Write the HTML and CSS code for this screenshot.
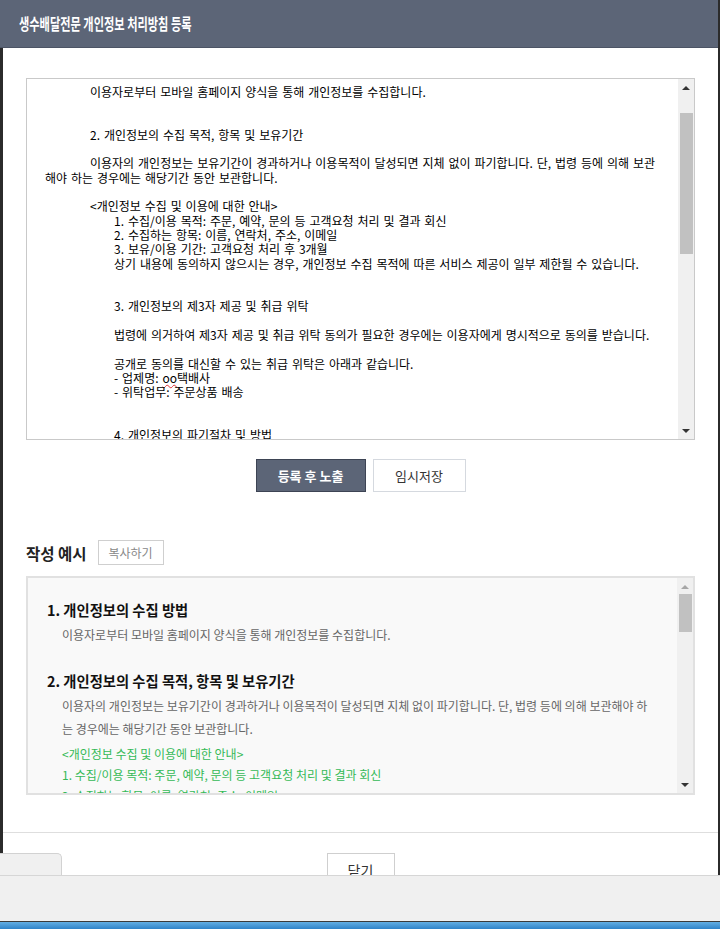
FILE: index.html
```html
<!DOCTYPE html>
<html>
  <head>
    <meta charset="utf-8"/>
    <meta name="viewport" content="width=device-width, initial-scale=1">
    <link rel="stylesheet" href="styles.css">
  </head>
<body>

<div class="win">
  <div class="head"><span class="title">생수배달전문 개인정보 처리방침 등록</span></div>

  <div class="sheet">
    <div class="ta">
      <div class="ta_text">
        <div class="i1">이용자로부터 모바일 홈페이지 양식을 통해 개인정보를 수집합니다.</div>
        <div class="i1 s2">2. 개인정보의 수집 목적, 항목 및 보유기간</div>
        <div class="i1 s1">이용자의 개인정보는 보유기간이 경과하거나 이용목적이 달성되면 지체 없이 파기합니다. 단, 법령 등에 의해 보관</div>
        <div>해야 하는 경우에는 해당기간 동안 보관합니다.</div>
        <div class="i1 s1">&lt;개인정보 수집 및 이용에 대한 안내&gt;</div>
        <div class="i2">1. 수집/이용 목적: 주문, 예약, 문의 등 고객요청 처리 및 결과 회신</div>
        <div class="i2">2. 수집하는 항목: 이름, 연락처, 주소, 이메일</div>
        <div class="i2">3. 보유/이용 기간: 고객요청 처리 후 3개월</div>
        <div class="i2">상기 내용에 동의하지 않으시는 경우, 개인정보 수집 목적에 따른 서비스 제공이 일부 제한될 수 있습니다.</div>
        <div class="i2 s2">3. 개인정보의 제3자 제공 및 취급 위탁</div>
        <div class="i2 s1">법령에 의거하여 제3자 제공 및 취급 위탁 동의가 필요한 경우에는 이용자에게 명시적으로 동의를 받습니다.</div>
        <div class="i2 s1">공개로 동의를 대신할 수 있는 취급 위탁은 아래과 같습니다.</div>
        <div class="i2">- 업제명: <span class="typo">oo</span>택배사</div>
        <div class="i2">- 위탁업무: 주문상품 배송</div>
        <div class="i2 s2">4. 개인정보의 파기절차 및 방법</div>
      </div>
      <div class="sbar">
        <div class="arrow up"></div>
        <div class="track"><div class="thumb thumb_a"></div></div>
        <div class="arrow down"></div>
      </div>
    </div>

    <div class="btns">
      <button class="btn btn_main">등록 후 노출</button>
      <button class="btn btn_temp">임시저장</button>
    </div>

    <div class="ex_head">
      <span class="ex_title">작성 예시</span>
      <button class="copy">복사하기</button>
    </div>

    <div class="ex">
      <div class="ex_text">
        <h4>1. 개인정보의 수집 방법</h4>
        <p>이용자로부터 모바일 홈페이지 양식을 통해 개인정보를 수집합니다.</p>
        <h4 class="sec">2. 개인정보의 수집 목적, 항목 및 보유기간</h4>
        <p>이용자의 개인정보는 보유기간이 경과하거나 이용목적이 달성되면 지체 없이 파기합니다. 단, 법령 등에 의해 보관해야 하<br>는 경우에는 해당기간 동안 보관합니다.</p>
        <p class="green">&lt;개인정보 수집 및 이용에 대한 안내&gt;<br>1. 수집/이용 목적: 주문, 예약, 문의 등 고객요청 처리 및 결과 회신<br>2. 수집하는 항목: 이름, 연락처, 주소, 이메일</p>
      </div>
      <div class="sbar">
        <div class="arrow up light"></div>
        <div class="track"><div class="thumb thumb_b"></div></div>
        <div class="arrow down"></div>
      </div>
    </div>

    <div class="foot">
      <button class="close">닫기</button>
    </div>
  </div>

  <div class="tab"></div>
</div>

<div class="bar"></div>
<div class="bar_line"></div>
<div class="task"></div>

</body>
</html>
```

FILE: styles.css
```css
* {
  box-sizing: border-box;
}

body {
  margin: 0;
  height: 929px;
  overflow: hidden;
  background-color: #2b2b2b;
  font-family: "Noto Sans CJK KR", sans-serif;
}

button {
  font-family: inherit;
  cursor: pointer;
  padding: 0;
}

.win {
  position: relative;
  width: 718px;
  height: 875px;
  overflow: hidden;
}

.head {
  height: 48px;
  background-color: #5c6577;
  border-bottom: 1px solid #4c5465;
  padding-left: 19px;
}

.title {
  display: inline-block;
  color: #fff;
  font-size: 16px;
  font-weight: bold;
  line-height: 47px;
  white-space: nowrap;
  transform: scaleX(0.7);
  transform-origin: left center;
}

.sheet {
  margin-left: 3px;
  height: 827px;
  background-color: #fff;
  padding: 30px 23px 0 23px;
}

/* textarea */
.ta {
  display: flex;
  height: 362px;
  border: 1px solid #c9c9c9;
}

.ta_text {
  flex: 1;
  overflow: hidden;
  padding: 6px 0 0 18px;
  font-size: 12px;
  line-height: 14.3px;
  word-spacing: 1.2px;
  color: #000;
  white-space: nowrap;
}

.i1 {
  padding-left: 45px;
}

.i2 {
  padding-left: 69px;
}

.s1 {
  margin-top: 14.3px;
}

.s2 {
  margin-top: 28.6px;
}

.typo {
  text-decoration: underline wavy #e03030;
  text-decoration-thickness: 1px;
}

/* scrollbars */
.sbar {
  width: 16px;
  background-color: #f0f0f0;
  display: flex;
  flex-direction: column;
}

.arrow {
  height: 17px;
  display: flex;
  align-items: center;
  justify-content: center;
}

.up::before {
  content: "";
  border-left: 4px solid transparent;
  border-right: 4px solid transparent;
  border-bottom: 4px solid #333;
}

.up.light::before {
  border-bottom-color: #a6a6a6;
}

.down::before {
  content: "";
  border-left: 4px solid transparent;
  border-right: 4px solid transparent;
  border-top: 4px solid #333;
}

.track {
  flex: 1;
  padding: 0 1px 0 2px;
}

.thumb {
  background-color: #c1c1c1;
}

.thumb_a {
  margin-top: 17px;
  height: 141px;
}

.thumb_b {
  margin-top: -1px;
  height: 38px;
}

/* buttons */
.btns {
  display: flex;
  justify-content: center;
  gap: 7px;
  margin-top: 19px;
}

.btn {
  height: 33px;
  font-size: 13px;
  border: 1px solid #d5d9df;
  background-color: #fff;
  color: #333;
}

.btn_main {
  width: 110px;
  background-color: #5c6577;
  border-color: #3d4454;
  color: #fff;
  font-weight: bold;
}

.btn_temp {
  width: 93px;
}

/* example */
.ex_head {
  display: flex;
  align-items: center;
  gap: 11px;
  height: 25px;
  margin-top: 48px;
}

.ex_title {
  font-size: 15.5px;
  font-weight: bold;
  color: #222;
}

.copy {
  width: 66px;
  height: 25px;
  border: 1px solid #cfcfcf;
  background-color: #fff;
  font-size: 12px;
  color: #888;
}

.ex {
  display: flex;
  height: 219px;
  margin-top: 11px;
  border: 2px solid #e1e1e1;
  background-color: #f9f9f9;
}

.ex_text {
  flex: 1;
  overflow: hidden;
  padding: 22px 0 0 19px;
  white-space: nowrap;
}

.ex_text h4 {
  margin: 0;
  font-size: 14.3px;
  line-height: 20px;
  color: #111;
}

.ex_text h4.sec {
  margin-top: 25px;
}

.ex_text p {
  margin: 3px 0 0 15px;
  font-size: 12px;
  line-height: 23px;
  color: #666;
}

.ex_text p.green {
  margin-top: 3px;
  line-height: 21px;
  color: #35b957;
}

/* footer */
.foot {
  display: flex;
  justify-content: center;
  margin: 37px -23px 0;
  padding-top: 20px;
  border-top: 1px solid #dedede;
}

.close {
  width: 68px;
  height: 34px;
  border: 1px solid #cfcfcf;
  background-color: #fff;
  font-size: 14px;
  color: #333;
}

.tab {
  position: absolute;
  left: 0;
  bottom: 0;
  width: 62px;
  height: 22px;
  background-color: #f0f0f0;
  border: 1px solid #d2d2d2;
  border-left: 0;
  border-bottom: 0;
  border-top-right-radius: 5px;
}

.bar {
  height: 46px;
  background-color: #f0f0f0;
  border-top: 1px solid #d6d6d6;
}

.bar_line {
  height: 1px;
  background-color: #3a3a3a;
}

.task {
  height: 7px;
  background: linear-gradient(#62aee3, #2f83c8);
}
```
